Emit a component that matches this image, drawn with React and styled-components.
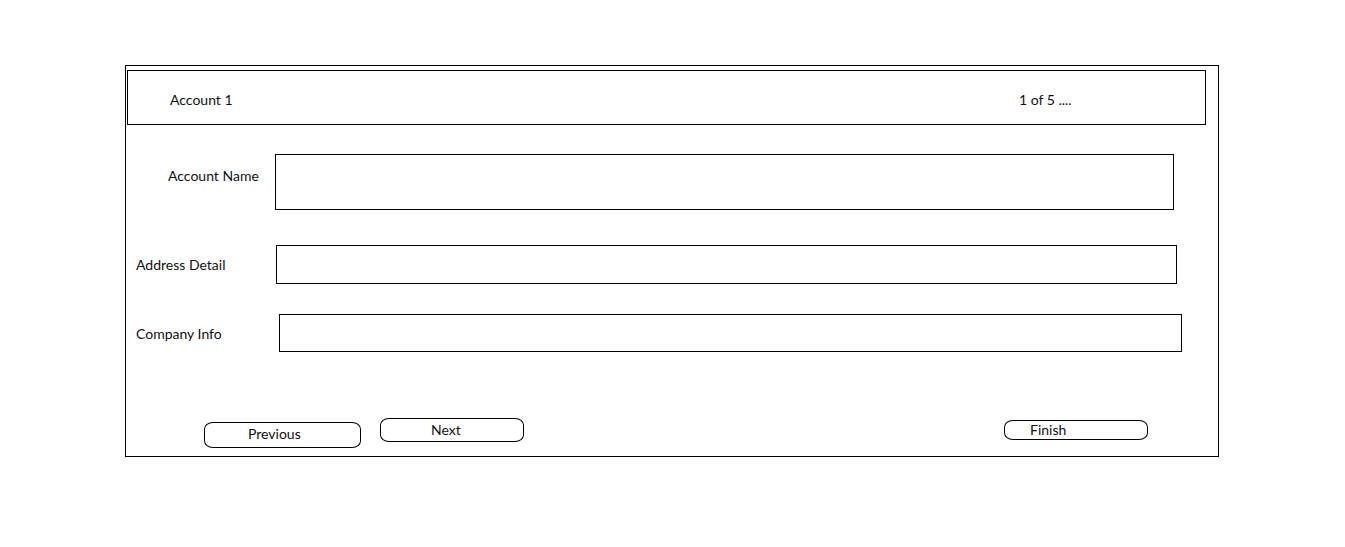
import styled, { createGlobalStyle } from 'styled-components';

const GlobalStyle = createGlobalStyle`
  body {
    margin: 0;
    background: #fff;
    font-family: Lato, 'Open Sans', sans-serif;
    color: #111;
  }
`;

const fields = [
  { label: 'Account Name', top: 29, indent: 42, labelCol: 107, width: 899, height: 56, align: 'start', labelTop: 14 },
  { label: 'Address Detail', top: 35, indent: 10, labelCol: 140, width: 901, height: 39, align: 'center', labelTop: 0 },
  { label: 'Company Info', top: 30, indent: 10, labelCol: 143, width: 903, height: 38, align: 'center', labelTop: 2 },
];

export default function App() {
  return (
    <>
      <GlobalStyle />
      <Page>
        <Frame>
          <Header>
            <HeaderText>Account 1</HeaderText>
            <HeaderText>1 of 5 ....</HeaderText>
          </Header>
          {fields.map((f) => (
            <Row key={f.label} $top={f.top} $indent={f.indent} $labelCol={f.labelCol} $align={f.align}>
              <Label $top={f.labelTop}>{f.label}</Label>
              <InputBox $width={f.width} $height={f.height} />
            </Row>
          ))}
          <Actions>
            <Button $width={157} $height={26} $top={4} $pad={43} $lift={3}>Previous</Button>
            <Button $width={144} $height={24} $top={0} $pad={50} $gap={19}>Next</Button>
            <Button $width={144} $height={20} $top={2} $pad={25} $gap={480}>Finish</Button>
          </Actions>
        </Frame>
      </Page>
    </>
  );
}

const Page = styled.div`
  padding: 65px 0 0 125px;
`;

const Frame = styled.div`
  box-sizing: border-box;
  width: 1094px;
  height: 392px;
  border: 1px solid #000;
`;

const Header = styled.div`
  box-sizing: border-box;
  display: grid;
  grid-template-columns: 849px auto;
  align-items: center;
  height: 55px;
  margin: 4px 12px 0 1px;
  padding-left: 42px;
  border: 1px solid #000;
`;

const HeaderText = styled.span`
  font-size: 14px;
  line-height: 16px;
  padding-top: 5px;
`;

const Row = styled.div`
  display: grid;
  grid-template-columns: ${(p) => p.$labelCol}px auto;
  align-items: ${(p) => p.$align};
  margin-top: ${(p) => p.$top}px;
  padding-left: ${(p) => p.$indent}px;
`;

const Label = styled.span`
  font-size: 14px;
  line-height: 16px;
  margin-top: ${(p) => p.$top}px;
`;

const InputBox = styled.div`
  box-sizing: border-box;
  width: ${(p) => p.$width}px;
  height: ${(p) => p.$height}px;
  border: 1px solid #000;
`;

const Actions = styled.div`
  display: flex;
  align-items: flex-start;
  margin-top: 66px;
  padding-left: 78px;
`;

const Button = styled.div`
  box-sizing: border-box;
  display: flex;
  align-items: center;
  width: ${(p) => p.$width}px;
  height: ${(p) => p.$height}px;
  margin-top: ${(p) => p.$top}px;
  margin-left: ${(p) => p.$gap || 0}px;
  padding-left: ${(p) => p.$pad}px;
  padding-bottom: ${(p) => p.$lift || 0}px;
  border: 1px solid #000;
  border-radius: 9px / 7px;
  font-size: 14px;
  line-height: 16px;
`;
